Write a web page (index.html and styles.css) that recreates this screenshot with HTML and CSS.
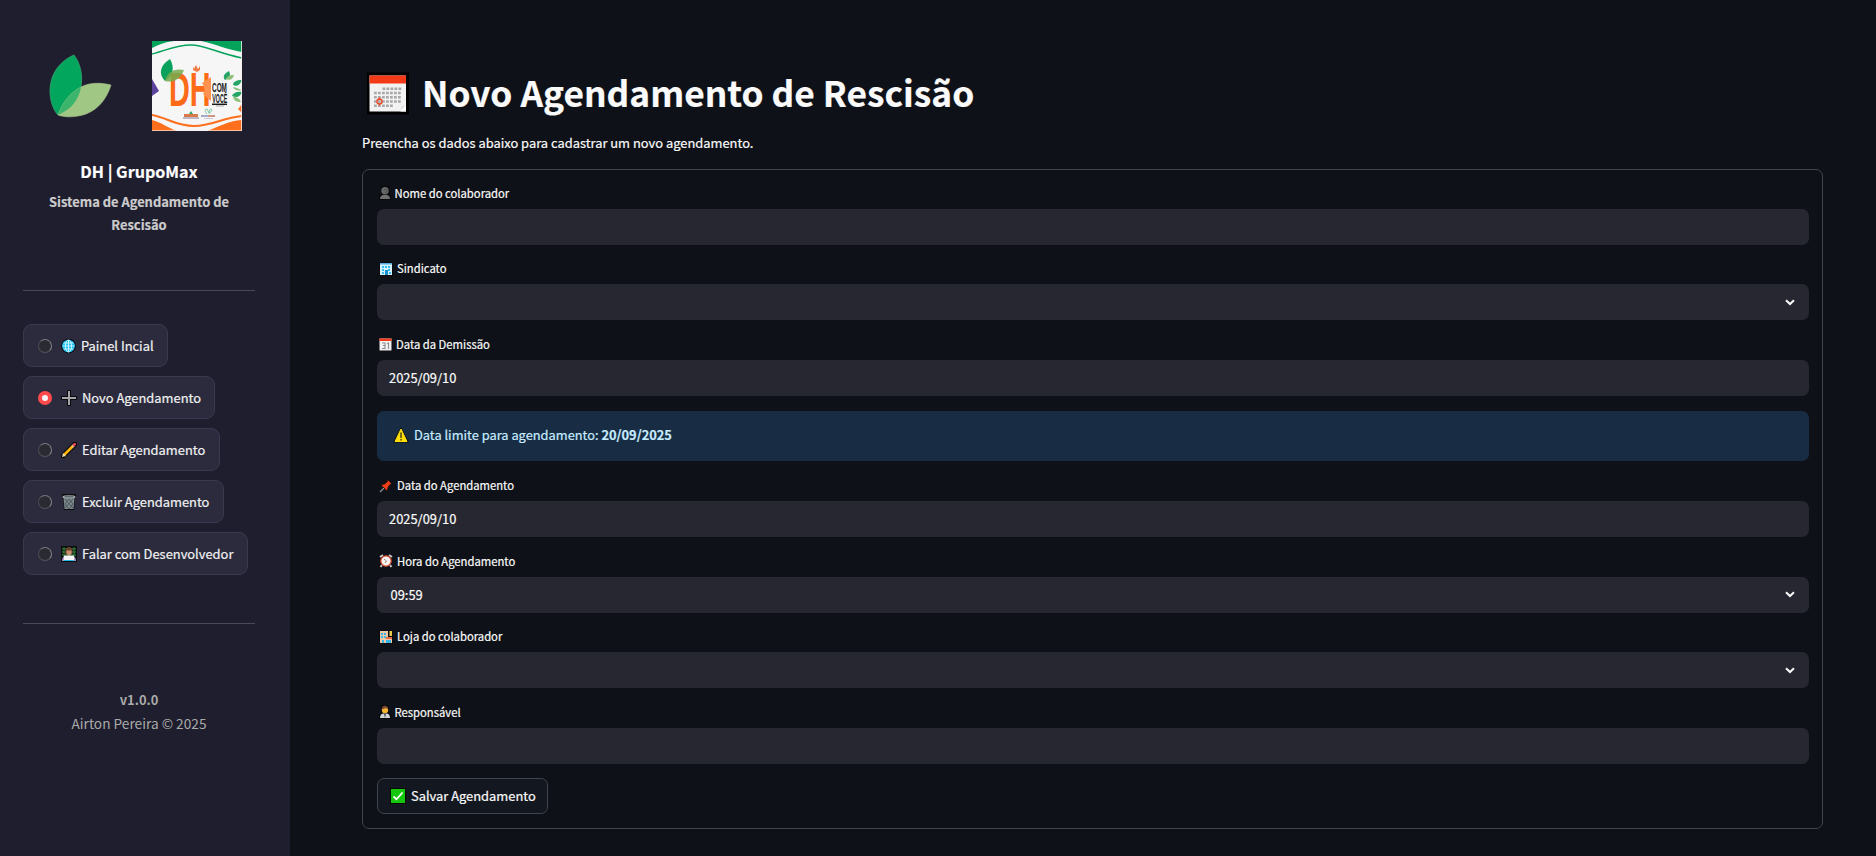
FILE: index.html
```html
<!DOCTYPE html>
<html lang="pt-BR">
<head>
<meta charset="utf-8">
<title>Novo Agendamento de Rescisão</title>
<link rel="stylesheet" href="styles.css">
</head>
<body>
<div class="app">
  <aside class="sidebar">
    <div class="logos">
      <svg class="logo-leaf" viewBox="0 0 64 64">
        <path d="M25 1C7 9 1 24 1 37c0 11 4 20 8 24 12-7 21-16 23-28C34 20 31 9 25 1Z" fill="#02a65c" stroke="#35a374" stroke-width=".8"/>
        <path d="M62 31c-12-3-23-2-30 2C21 39 14 48 9 61c8 3 19 2 28-1 13-5 21-16 25-29Z" fill="#a0c784" stroke="#b1ca91" stroke-width=".6"/>
        <path d="M32 33c-2 12-9 22-23 28C14 48 21 39 32 33Z" fill="#3bb46c"/>
      </svg>
      <svg class="logo-dh" viewBox="0 0 90 90">
        <path fill="#f6f6f6" d="M0 0h90v90H0z"/>
        <path d="M0 0h22C13 1 6 4 0 7ZM49 0h41v11C76 9 64 3 49 0Z" fill="#04a35b"/>
        <path d="M0 13C15 9 25 4 39 4s26 8 51 13" fill="none" stroke="#04a35b" stroke-width="1.4"/>
        <path d="M0 79c9 2 16 8 25 11H0ZM90 79c-14 1-24 7-35 11h35Z" fill="#fd6e1d"/>
        <path d="M0 74c16 3 24 11 42 11s28-8 48-10" fill="none" stroke="#fd6e1d" stroke-width="2"/>
        <path d="M0 38l7 12-7 5Z" fill="#5b429e"/><path d="M90 63l-4 5 4 4Z" fill="#fd6e1d"/>
        <text transform="translate(17 65) scale(.6 1)" class="dh-big">DH</text>
        <path d="M59 36v24l-8-7c3-4 1-8-1-11Z" fill="#ff934f"/>
        <path d="M18 18c-10 6-12 15-5 22 8-5 10-13 5-22Z" fill="#09a15b"/>
        <path d="M32 29c-10-2-17 2-19 11 8 2 15-1 19-11Z" fill="#76aa4e" opacity=".85"/>
        <path d="M41 25l1 3 2-4 2 4 2-3v4l-3 2-4-2Z" fill="#f47b42"/>
        <text transform="translate(60 51) scale(.535 1)" class="dh-small">COM</text>
        <text transform="translate(60.300 62) scale(.44 1)" class="dh-small">VOCÊ</text>
        <path d="M60 63.300h15" stroke="#191919" stroke-width="1.500"/><path d="M64 65h8" stroke="#aaa"/>
        <path d="M77 30c-6 3-6 6-4 9 5-2 6-5 4-9ZM90 39c-6 0-9 2-9 5 4 2 7 0 9-5ZM90 51c-5-1-9 1-10 4 5 2 8 1 10-4Z" fill="#24a466"/>
        <path d="M82 34c-4 0-7 1-8 4 4 2 7 0 8-4ZM90 49c-5-2-8-3-9-3 1 3 5 4 9 3ZM81 56c1 4 4 5 8 5-1-3-4-5-8-5Z" fill="#8cc078"/>
        <rect x="32" y="73" width="14" height="3" fill="#d9794a"/><path d="M31 77h16" stroke="#81749a"/>
        <path d="M37 73l2-3 2 3Z" fill="#27a56a"/><path d="M49 75h14" stroke="#6d78ae" stroke-width="1.200"/><path d="M56 75h7" stroke="#ef8a4e" stroke-width="1.200"/>
        <path d="M55 73c-2-2-3-5 0-5l2 4c0-4 2-5 3-3l-3 4" fill="none" stroke="#65bd96" stroke-width=".8"/><path d="M52 77.500h9" stroke="#b6b8cc" stroke-width=".7"/>
        <path d="M89.500 0v90M0 89.700h90" stroke="#f7eee8" stroke-width=".8"/>
      </svg>
    </div>
    <h2 class="brand"><span>DH | GrupoMax</span></h2>
    <p class="tagline">Sistema de Agendamento de<br>Rescisão</p>
    <hr class="rule">
    <nav class="menu">
      <div class="item item-home"><i class="radio"></i>
        <svg class="ico ico-globe" viewBox="0 0 15 16"><circle cx="7.500" cy="8" r="7.300" fill="#090d13"/><circle cx="7.500" cy="8" r="6.300" fill="#1ac1f7"/><g fill="none" stroke="#d9f8ff" stroke-width=".9"><path d="M7.500 2v12M1.500 8h12M2.500 5h10M2.500 11h10"/><ellipse cx="7.500" cy="8" rx="3" ry="6"/></g></svg>
        <span>Painel Incial</span></div>
      <div class="item item-new"><i class="radio on"></i>
        <svg class="ico" viewBox="0 0 16 16"><path d="M8 0v16M0 8h16" stroke="#0b0b0d" stroke-width="4"/><path d="M8 1v14M1 8h14" stroke="#a5a5a7" stroke-width="2"/></svg>
        <span>Novo Agendamento</span></div>
      <div class="item"><i class="radio"></i>
        <svg class="ico" viewBox="0 0 16 16"><path d="M2 14L14 2" stroke="#0b0b0d" stroke-width="5" stroke-linecap="round"/><path d="M3 13L12.500 3.500" stroke="#fdb60b" stroke-width="2.600"/><path d="M1 15l1-4 3 3Z" fill="#eed6ae"/><path d="M11.500 4.500l1-1" stroke="#d4d9dc" stroke-width="2.600"/><path d="M12.800 3.200l1-1" stroke="#ec4a5c" stroke-width="2.600" stroke-linecap="round"/></svg>
        <span>Editar Agendamento</span></div>
      <div class="item"><i class="radio"></i>
        <svg class="ico" viewBox="0 0 16 16"><path d="M1 0h14v4l-1 1-1 11H3L2 5 1 4Z" fill="#0b0d0f"/><path d="M2.500 4h11l-1 11h-9Z" fill="#7d888c"/><path d="M4 5l8 9M8 5l4 5M4 10l4 5M12 5l-8 9M8 5l-4 5M12 10l-4 5" stroke="#414b50" stroke-width=".8"/><path d="M1.700 2.500q0-1.200 6.300-1.200t6.300 1.200v1.500H1.700Z" fill="#a4adaf"/><path d="M3.500 2.800h9" stroke="#424a4d"/></svg>
        <span>Excluir Agendamento</span></div>
      <div class="item"><i class="radio"></i>
        <svg class="ico" viewBox="0 0 16 16"><path fill="#090e0b" d="M0 0h16v16H0z"/><path d="M1 3h14M1 6h14M1 9h14M3 1v10M13 1v10" stroke="#2c6e38" stroke-width="1.300"/><path d="M4.500 5q0-4 3.500-4t3.500 4v3h-7Z" fill="#69402d"/><path d="M5.500 4.500h5V8L8 10 5.500 8Z" fill="#c6906f"/><path d="M1 15q0-5 4-5h6q4 0 4 5Z" fill="#af95d2"/><path d="M3 9.500h10v4.500H3Z" fill="#f4f5f7"/><path d="M3 14h10v1H3Z" fill="#29b9e7"/></svg>
        <span>Falar com Desenvolvedor</span></div>
    </nav>
    <hr class="rule rule-low">
    <footer class="credits"><b>v1.0.0</b><br><span class="author">Airton Pereira © 2025</span></footer>
  </aside>
  <main class="main">
    <h1 class="title">
      <svg class="title-ico" viewBox="0 0 42 42"><path fill="#000" d="M0 0h42v42H0z"/><path fill="#f2f2f2" d="M2.500 3h36.500v36H2.500z"/><path fill="#f33a17" d="M2.500 3h36.500v8H2.500z"/><g stroke="#a9a9a9" stroke-width="2.600" stroke-dasharray="2.800 1.200"><path d="M15.500 16.300h19.500M7 20.500h28M7 24.800h28M7 29h28M7 33.200h20"/></g><circle cx="12.500" cy="29" r="2.500" fill="none" stroke="#f1492c" stroke-width="1.400"/><path d="M12.500 25v2M12.500 31v2" stroke="#f1492c" stroke-width="1.200"/><path d="M33.500 38l5.500-5.500V39h-5.500Z" fill="#fff"/><path d="M33.500 38l5-5-4 1Z" fill="#ddd"/></svg>
      <span>Novo Agendamento de Rescisão</span>
    </h1>
    <p class="intro">Preencha os dados abaixo para cadastrar um novo agendamento.</p>
    <form class="form">
      <div class="field"><label>
        <svg class="lico slim" viewBox="0 0 12 14"><path d="M2 0h8l1 8 1 1v5H0V9l2-1Z" fill="#08090b"/><path d="M1 13q0-3.500 3-4h4q3 .5 3 4Z" fill="#707070"/><circle cx="6" cy="4.700" r="3.700" fill="#686868"/><path d="M5 4q2-2 3 0T6 7" fill="none" stroke="#444" stroke-width=".8"/></svg>
        <span>Nome do colaborador</span></label><div class="input"></div></div>
      <div class="field"><label>
        <svg class="lico" viewBox="0 0 14 14"><path fill="#090b0e" d="M0 0h14v14H0z"/><path fill="#d6f2fc" d="M1 1h12v12H1z"/><path fill="#55aede" d="M1 1h12v1.500H1z"/><path d="M3 4h2v2H3zM6 4h2v2H6zM9 4h2v2H9zM3 7h2v2H3zM9 7h2v2H9zM3 10h2v2H3zM10 10h2v2h-2z" fill="#34bdf0"/><path d="M6 8h3v5H6z" fill="#168fcb"/></svg>
        <span>Sindicato</span></label><div class="input"><svg class="chev" viewBox="0 0 10 7"><path d="M1 1.200L5 5l4-3.800" fill="none" stroke="#fafafa" stroke-width="2"/></svg></div></div>
      <div class="field"><label>
        <svg class="lico cal" viewBox="0 0 13 13"><path fill="#090b0e" d="M0 0h13v13H0z"/><path fill="#f1f1f1" d="M.5.500h12v12H.5z"/><path fill="#f33a1b" d="M.5.500h12v2.500H.5z"/><path d="M3 5h3v5.500H3M4 7.500h2M8 5.500l1.500-.5v6" fill="none" stroke="#8e8e8e" stroke-width="1.100"/></svg>
        <span>Data da Demissão</span></label><div class="input"><span>2025/09/10</span></div></div>
      <div class="alert">
        <svg class="ico" viewBox="0 0 16 16"><path d="M8 0L16 15.500H0Z" fill="#0b0d0c"/><path d="M8 2l6 12.500H2Z" fill="#ffdd08" stroke="#ffdd08" stroke-linejoin="round"/><path d="M8 5.500V11M8 12v1.500" stroke="#4b4413" stroke-width="1.500"/></svg>
        <span>Data limite para agendamento: <b>20/09/2025</b></span></div>
      <div class="field"><label>
        <svg class="lico" viewBox="0 0 14 14"><path d="M1 13L7 7" stroke="#8e9296" stroke-width="1.300"/><path d="M8 0l5 5-2 .5-2 3-1 3.500L2 6l3.500-1 3-2.500Z" fill="#ec3e19" stroke="#180b0b" stroke-width=".7"/></svg>
        <span>Data do Agendamento</span></label><div class="input input-date"><span>2025/09/10</span></div></div>
      <div class="field"><label>
        <svg class="lico" viewBox="0 0 14 14"><path d="M1 3l3-2M13 3l-3-2M3 11l-1.500 2M11 11l1.500 2" stroke="#c7c7c7" stroke-width="2"/><circle cx="7" cy="7" r="5.200" fill="#f8f4f2" stroke="#d94427" stroke-width="1.200"/><path d="M5 5l2.500 2L6 9" fill="none" stroke="#976b60" stroke-width=".9"/></svg>
        <span>Hora do Agendamento</span></label><div class="input"><span class="val-time">09:59</span><svg class="chev" viewBox="0 0 10 7"><path d="M1 1.200L5 5l4-3.800" fill="none" stroke="#fafafa" stroke-width="2"/></svg></div></div>
      <div class="field"><label>
        <svg class="lico" viewBox="0 0 14 14"><path fill="#090b0e" d="M0 0h14v14H0z"/><path fill="#f0c7a7" d="M1 1h8v12H1z"/><path fill="#f0c7a7" d="M8 7h5v6H8z"/><path d="M2 3h2v2H2zM5 3h2v2H5zM2 6h2v2H2zM5 6h2v2H5zM3 10h2v3H3zM7 10h5v3H7z" fill="#35b6e7"/><path fill="#e36c42" d="M7 7h6v2H7z"/><path fill="#eacb4c" d="M10.500 1H13v5h-2.500z"/></svg>
        <span>Loja do colaborador</span></label><div class="input"><svg class="chev" viewBox="0 0 10 7"><path d="M1 1.200L5 5l4-3.800" fill="none" stroke="#fafafa" stroke-width="2"/></svg></div></div>
      <div class="field"><label>
        <svg class="lico slim" viewBox="0 0 12 14"><path d="M2 0h8v8l2 2v4H0v-4l2-2Z" fill="#08090b"/><path d="M1 13q0-4 3-4.500h4q3 .5 3 4.500Z" fill="#cfd2d5"/><circle cx="6" cy="5" r="3.200" fill="#f5b52f"/><path d="M2.700 4.500Q3 .8 6 .8t3.300 3.700L7 3Z" fill="#7b4a32"/><path d="M5 8.500h2L6 13Z" fill="#44474a"/></svg>
        <span>Responsável</span></label><div class="input"></div></div>
      <button type="button" class="save">
        <svg class="ico" viewBox="0 0 16 16"><path fill="#060b06" d="M0 0h16v16H0z"/><path fill="#15c60c" d="M1 1h14v14H1z"/><path d="M3.500 8.500l3 2.700L12.500 4.500" fill="none" stroke="#fff" stroke-width="1.700"/></svg>
        <span>Salvar Agendamento</span></button>
    </form>
  </main>
</div>
</body>
</html>
```
FILE: styles.css
```css
* { box-sizing: border-box; }
html, body { height: 100%; overflow: hidden; }
body { margin: 0; background: #0e1117; color: #fafafa; font-family: "Noto Sans CJK SC", "Open Sans", sans-serif; font-size: 12.900px; line-height: 23px; -webkit-text-stroke: .2px currentColor; }
svg { display: block; flex: none; -webkit-text-stroke: 0; }
span, p { white-space: nowrap; }
.app { display: flex; height: 856px; }
.sidebar { width: 290px; height: 856px; background: #1f1e2e; padding: 41px 35px 0 23px; flex: none; }
.logos { display: flex; height: 90px; padding-left: 26px; }
.logo-leaf { width: 64px; height: 64px; margin-top: 13px; }
.logo-dh { width: 90px; height: 90px; margin-left: 39px; }
.dh-big { font: bold 48px "Liberation Sans", sans-serif; fill: #fd6a18; }
.dh-small { font: bold 12px "Liberation Sans", sans-serif; fill: #191919; }
.brand { margin: 28px 0 0; font-size: 16.100px; line-height: 24px; text-align: center; color: #fff; font-weight: 700; }
.tagline { margin: 7px 0 0; line-height: 23px; text-align: center; font-weight: 700; color: #ccc; }
.rule { border: 0; height: 1px; margin: 54px 0 0; background: #4a4855; }
.menu { display: flex; flex-direction: column; align-items: flex-start; gap: 9px; margin-top: 33px; }
.item { display: flex; align-items: center; height: 43px; padding: 0 14px; border: 1px solid #3a3950; border-radius: 9px; background: #2b2b3d; color: #f1f1f1; }
.item-home, .item-new { padding-right: 13px; }
.radio { width: 14px; height: 14px; border-radius: 50%; background: #2a2a33; border: 1px solid; border-color: #777780 #85858d #55555f #4a4a54; margin-right: 9px; }
.radio.on { background: #f4f4f6; border: 4.500px solid #ff4b4b; }
.ico { width: 16px; height: 16px; margin-right: 5px; }
.ico-globe { width: 15px; }
.rule-low { margin-top: 48px; }
.credits { margin-top: 64px; text-align: center; line-height: 24px; color: #aaa; -webkit-text-stroke: 0; }
.author { font-size: 13.650px; line-height: 1; letter-spacing: .02px; }
.main { flex: 1; padding: 66px 52px 0 72px; }
.title { display: flex; align-items: center; height: 52px; margin: 0; padding-left: 5px; font-size: 35.300px; line-height: 52px; font-weight: 700; }
.title-ico { width: 42px; height: 43px; margin: 2px 13px 0 0; }
.intro { margin: 13px 0 0; line-height: 23px; height: 24px; }
.form { border: 1px solid #41444c; border-radius: 7px; height: 660px; margin: 14px 0 0; padding: 13.600px 13px 0 14px; width: 1461px; }
.field { height: 61.200px; margin-bottom: 14.400px; }
.field label { display: flex; align-items: center; height: 25.200px; padding: 0 0 6.200px 1.500px; font-size: 11.280px; line-height: 19px; }
.lico { width: 14px; height: 14px; margin-right: 4.500px; }
.lico.slim { width: 12px; margin-right: 4px; }
.lico.cal { width: 13px; height: 13px; }
.input { display: flex; align-items: center; height: 36px; border-radius: 7px; background: #262730; padding: 0 14px 0 12px; }
.input-date { padding-bottom: 1px; }
.val-time { margin-left: 1.500px; }
.chev { width: 10px; height: 7px; margin-left: auto; }
.alert { display: flex; align-items: center; height: 50.400px; margin: 14.700px 0 15px; padding: 0 16px 2px; border-radius: 7px; background: #182d43; color: #c7ebff; font-size: 12.840px; }
.save { display: flex; align-items: center; height: 36px; padding: 0 11px 1px 12px; border: 1px solid #41444c; border-radius: 7px; background: #131720; color: #fafafa; font: inherit; }
```
